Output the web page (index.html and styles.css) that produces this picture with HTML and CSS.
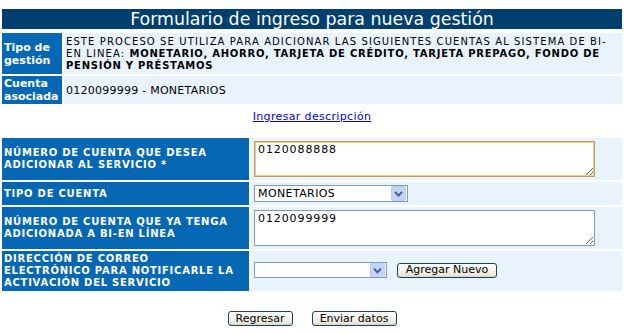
FILE: index.html
```html
<!DOCTYPE html>
<html lang="es">
<head>
<meta charset="utf-8">
<title>Formulario de ingreso para nueva gestión</title>
<link rel="stylesheet" href="styles.css">
</head>
<body>
<div class="wrap">
  <div class="title">Formulario de ingreso para nueva gestión</div>
  <div class="info">
    <div class="lbl">Tipo de gestión</div>
    <div class="val desc"><p class="desc-text">ESTE PROCESO SE UTILIZA PARA ADICIONAR LAS SIGUIENTES CUENTAS AL SISTEMA DE BI-EN LINEA: <b>MONETARIO, AHORRO, TARJETA DE CRÉDITO, TARJETA PREPAGO, FONDO DE PENSIÓN Y PRÉSTAMOS</b></p></div>
    <div class="lbl">Cuenta asociada</div>
    <div class="val acct">0120099999 - MONETARIOS</div>
  </div>
  <div class="linkrow"><a href="#" class="link">Ingresar descripción</a></div>
  <div class="form">
    <div class="flbl">NÚMERO DE CUENTA QUE DESEA ADICIONAR AL SERVICIO *</div>
    <div class="fval"><textarea class="ta focus">0120088888</textarea></div>
    <div class="flbl">TIPO DE CUENTA</div>
    <div class="fval"><select class="sel sel1"><option>MONETARIOS</option></select></div>
    <div class="flbl">NÚMERO DE CUENTA QUE YA TENGA ADICIONADA A BI-EN LÍNEA</div>
    <div class="fval"><textarea class="ta">0120099999</textarea></div>
    <div class="flbl"><span>DIRECCIÓN DE CORREO<br>ELECTRÓNICO PARA NOTIFICARLE LA ACTIVACIÓN DEL SERVICIO</span></div>
    <div class="fval inline"><select class="sel sel2"><option></option></select><button class="btn btn-add" type="button">Agregar Nuevo</button></div>
  </div>
  <div class="actions">
    <button class="btn btn-back" type="button">Regresar</button>
    <button class="btn btn-send" type="button">Enviar datos</button>
  </div>
</div>
</body>
</html>
```
FILE: styles.css
```css
html, body {
  margin: 0;
  padding: 0;
  background: #ffffff;
}
body {
  font-family: "DejaVu Sans", Verdana, sans-serif;
  color: #000;
}
.wrap {
  padding: 9px 2px 0 2px;
}
.title {
  height: 20px;
  line-height: 20px;
  background: #003f6e;
  color: #ffffff;
  font-size: 17.4px;
  text-align: center;
  margin-bottom: 4px;
}
.info {
  display: grid;
  grid-template-columns: 60px 1fr;
  grid-template-rows: 41px 28px;
  gap: 2px;
}
.lbl {
  background: #0668b4;
  color: #ffffff;
  font-weight: bold;
  font-size: 11px;
  line-height: 13px;
  padding: 0 2px;
  display: flex;
  align-items: center;
}
.val {
  background: #e9f3fd;
  display: flex;
  align-items: center;
  padding: 0 2px;
}
.val.desc {
  display: block;
  padding: 3px 2px 0 2px;
}
.desc-text {
  margin: 0;
  font-size: 10px;
  line-height: 12px;
  letter-spacing: 1.1px;
}
.desc-text b {
  letter-spacing: 0.75px;
}
.acct {
  font-size: 11px;
  letter-spacing: 0.25px;
}
.linkrow {
  text-align: center;
  height: 34px;
  padding-top: 1px;
  box-sizing: border-box;
}
.link {
  font-size: 11px;
  letter-spacing: 0.35px;
  color: #0000ee;
}
.form {
  display: grid;
  grid-template-columns: 247px 1fr;
  grid-template-rows: 42px 23px 42px 40px;
  gap: 2px;
}
.flbl {
  background: #0668b4;
  color: #ffffff;
  font-weight: bold;
  font-size: 10px;
  line-height: 12px;
  letter-spacing: 0.75px;
  padding: 0 2px;
  display: flex;
  align-items: center;
}
.fval {
  background: #e9f3fd;
  padding: 3px;
  display: flex;
  align-items: flex-start;
}
.fval.inline {
  align-items: center;
  padding-top: 1px;
}
.ta {
  box-sizing: border-box;
  width: 341px;
  height: 36px;
  margin: 0;
  border: 1px solid #7f9db9;
  padding: 1px 3px;
  font-family: "DejaVu Sans", Verdana, sans-serif;
  font-size: 11px;
  letter-spacing: 0.9px;
  line-height: 13px;
  background: #fff;
  color: #000;
  resize: both;
}
.ta.focus {
  border-color: #c2a05a;
  box-shadow: inset 0 0 0 1px #e8cb84;
  outline: none;
}
.sel {
  box-sizing: border-box;
  -webkit-appearance: none;
  appearance: none;
  margin: 0;
  height: 17px;
  border: 1px solid #7f9db9;
  border-radius: 0;
  padding: 0 20px 0 3px;
  font-family: "DejaVu Sans", Verdana, sans-serif;
  font-size: 11px;
  letter-spacing: 0.4px;
  color: #000;
  background-color: #fff;
  background-image: url("data:image/svg+xml;utf8,<svg xmlns='http://www.w3.org/2000/svg' width='15' height='15'><rect x='0.5' y='0.5' width='14' height='14' rx='1' fill='%23c3d4fb' stroke='%23b8cdf6'/><path d='M4 6 L7.5 9.5 L11 6' fill='none' stroke='%234d6185' stroke-width='2'/></svg>");
  background-repeat: no-repeat;
  background-position: right 1px center;
}
.sel1 {
  width: 154px;
}
.sel2 {
  width: 133px;
  height: 16px;
}
.btn {
  box-sizing: border-box;
  height: 15px;
  margin: 0;
  padding: 0;
  white-space: nowrap;
  border: 1px solid #1c3f73;
  border-radius: 3px;
  background: linear-gradient(#ffffff, #ece9d8 85%, #d6d0c0);
  font-family: "DejaVu Sans", Verdana, sans-serif;
  font-size: 11px;
  line-height: 12px;
  color: #000;
}
.btn-add {
  width: 100px;
  margin-left: 10px;
}
.actions {
  display: flex;
  justify-content: center;
  gap: 19px;
  padding-top: 20px;
}
.btn-back {
  width: 65px;
}
.btn-send {
  width: 85px;
}
```
